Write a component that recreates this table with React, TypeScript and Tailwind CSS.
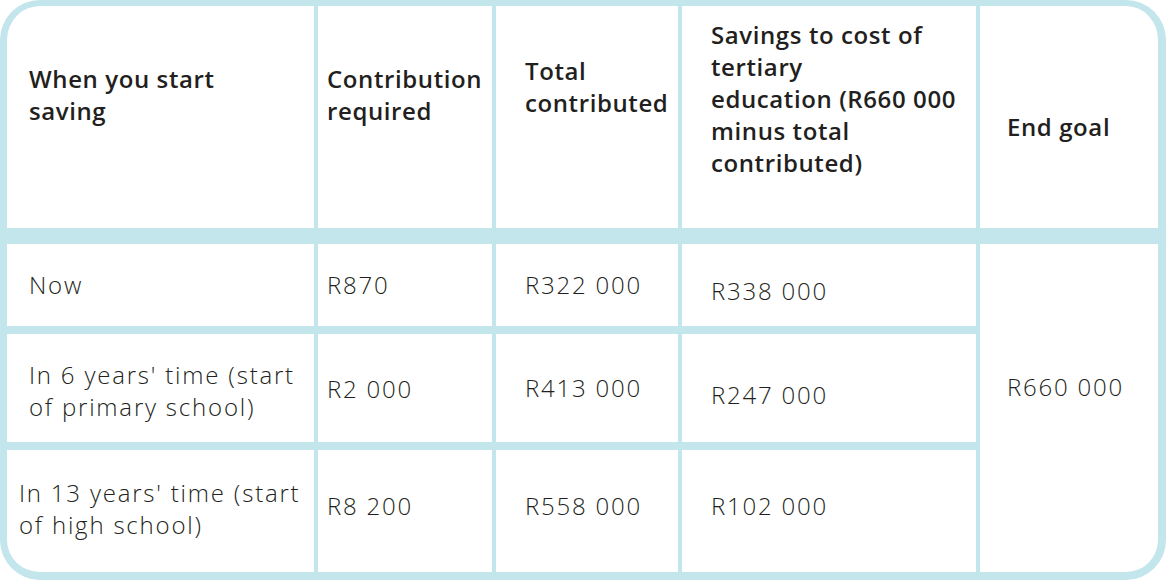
import React from "react";

const H = "font-semibold text-[24px] leading-[32px] tracking-[0.6px] text-[#231f20]";
const B = "font-light text-[24px] leading-[32px] tracking-[1.8px] text-[#231f20]";

export default function App() {
  return (
    <div className="w-[1166px] h-[582px] bg-white" style={{ fontFamily: "'Open Sans', Lato, sans-serif" }}>
      <div className="w-[1166px] h-[580px] rounded-[40px] border-t-[6px] border-l-[7px] border-r-[8px] border-b-[8px] border-[#c3e5ec] bg-[#c3e5ec] overflow-hidden">
        <div className="grid grid-cols-[307px_174px_182px_294px_178px] grid-rows-[222px_16px_82px_8px_108px_8px_122px] gap-x-[4px] h-full">
          {/* header */}
          <div className={`bg-white pl-[22px] pt-[57px] ${H}`}>When you start<br />saving</div>
          <div className={`bg-white pl-[9px] pt-[57px] ${H}`}>Contribution<br />required</div>
          <div className={`bg-white pl-[29px] pt-[49px] ${H}`}>Total<br />contributed</div>
          <div className={`bg-white pl-[29px] pt-[13px] ${H}`}>Savings to cost of<br />tertiary<br />education (R660 000<br />minus total<br />contributed)</div>
          <div className={`bg-white pl-[27px] pt-[105px] ${H}`}>End goal</div>
          {/* band */}
          <div className="col-span-5" />
          {/* row 1 */}
          <div className={`bg-white pl-[22px] pt-[25px] ${B}`}>Now</div>
          <div className={`bg-white pl-[9px] pt-[25px] ${B}`}>R870</div>
          <div className={`bg-white pl-[29px] pt-[25px] ${B}`}>R322 000</div>
          <div className={`bg-white pl-[29px] pt-[31px] ${B}`}>R338 000</div>
          <div className={`bg-white row-span-5 pl-[27px] pt-[127px] ${B}`}>R660 000</div>
          {/* sep */}
          <div className="col-span-4" />
          {/* row 2 */}
          <div className={`bg-white pl-[22px] pt-[25px] ${B}`}>In 6 years' time (start<br />of primary school)</div>
          <div className={`bg-white pl-[9px] pt-[39px] ${B}`}>R2 000</div>
          <div className={`bg-white pl-[29px] pt-[38px] ${B}`}>R413 000</div>
          <div className={`bg-white pl-[29px] pt-[45px] ${B}`}>R247 000</div>
          {/* sep */}
          <div className="col-span-4" />
          {/* row 3 */}
          <div className={`bg-white pl-[12px] pt-[27px] ${B}`}>In 13 years' time (start<br />of high school)</div>
          <div className={`bg-white pl-[9px] pt-[40px] ${B}`}>R8 200</div>
          <div className={`bg-white pl-[29px] pt-[40px] ${B}`}>R558 000</div>
          <div className={`bg-white pl-[29px] pt-[40px] ${B}`}>R102 000</div>
        </div>
      </div>
    </div>
  );
}
